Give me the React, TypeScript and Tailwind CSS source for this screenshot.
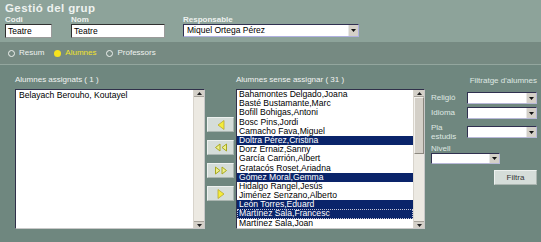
import React from "react";

const pending = [
  { name: "Bahamontes Delgado,Joana" },
  { name: "Basté Bustamante,Marc" },
  { name: "Bofill Bohigas,Antoni" },
  { name: "Bosc Pins,Jordi" },
  { name: "Camacho Fava,Miguel" },
  { name: "Doltra Pérez,Cristina", sel: true },
  { name: "Dorz Ernaiz,Sanny" },
  { name: "García Carrión,Albert" },
  { name: "Gratacós Roset,Ariadna" },
  { name: "Gómez Moral,Gemma", sel: true },
  { name: "Hidalgo Rangel,Jesús" },
  { name: "Jiménez Senzano,Alberto" },
  { name: "León Torres,Eduard", sel: true },
  { name: "Martínez Sala,Francesc", sel: true, focus: true },
  { name: "Martínez Sala,Joan" },
];

function DropBtn() {
  return (
    <div className="w-[10px] h-full bg-[#d4d0c8] border-l border-[#e8e8e8] flex items-center justify-center shrink-0">
      <svg width="5" height="3" viewBox="0 0 5 3">
        <path d="M0 0h5L2.5 3z" fill="#111" />
      </svg>
    </div>
  );
}

function Select({ w, h = "h-[12px]" }: { w: string; h?: string }) {
  return (
    <div className={`${w} ${h} bg-white flex border-t border-l border-[#303050] border-b border-r border-b-[#b8b8d8] border-r-[#b8b8d8]`}>
      <div className="flex-1" />
      <DropBtn />
    </div>
  );
}

function Scrollbar({ thumb }: { thumb?: boolean }) {
  return (
    <div className="w-[11px] h-full flex flex-col bg-[#ece9e2] border-l border-[#d8d4cc]">
      <div className="h-[7px] bg-[#d4d0c8] flex items-center justify-center border-b border-[#a8a49c]">
        <svg width="5" height="3" viewBox="0 0 5 3">
          <path d="M2.5 0L5 3H0z" fill="#222" />
        </svg>
      </div>
      {thumb ? (
        <div className="h-[57px] bg-[#d4d0c8] border border-[#f4f2ee] border-b-[#8c887f] border-r-[#8c887f]" />
      ) : null}
      <div className="flex-1" />
      <div className="h-[7px] bg-[#d4d0c8] flex items-center justify-center border-t border-[#a8a49c]">
        <svg width="5" height="3" viewBox="0 0 5 3">
          <path d="M0 0h5L2.5 3z" fill="#222" />
        </svg>
      </div>
    </div>
  );
}

function MoveBtn({ kind }: { kind: "l" | "ll" | "rr" | "r" }) {
  let icon: React.ReactNode = null;
  if (kind === "l")
    icon = (
      <svg width="8" height="10" viewBox="0 0 8 10">
        <path d="M7 0.5V9.5L1 5z" fill="#f4ec3a" stroke="#b8a830" strokeWidth="0.8" />
      </svg>
    );
  if (kind === "r")
    icon = (
      <svg width="8" height="10" viewBox="0 0 8 10">
        <path d="M1 0.5V9.5L7 5z" fill="#f4ec3a" stroke="#b8a830" strokeWidth="0.8" />
      </svg>
    );
  if (kind === "ll")
    icon = (
      <svg width="14" height="9" viewBox="0 0 14 9">
        <path d="M6 1V8L1.5 4.5z M12.5 1V8L8 4.5z" fill="#eef08a" stroke="#a8a820" strokeWidth="1" />
      </svg>
    );
  if (kind === "rr")
    icon = (
      <svg width="14" height="9" viewBox="0 0 14 9">
        <path d="M1.5 1V8L6 4.5z M8 1V8L12.5 4.5z" fill="#eef08a" stroke="#a8a820" strokeWidth="1" />
      </svg>
    );
  return (
    <div className="w-[27px] h-[15px] bg-[#d5ddd9] border border-[#edf1ef] border-b-[#aab5b0] border-r-[#aab5b0] flex items-center justify-center">
      {icon}
    </div>
  );
}

function Radio({ label, on }: { label: string; on?: boolean }) {
  return (
    <div className="flex items-center gap-[4px] mr-[10px]">
      {on ? (
        <div className="w-[7px] h-[7px] rounded-full bg-[#f7e21c]" />
      ) : (
        <div className="w-[7px] h-[7px] rounded-full border border-[#eef2ef]" />
      )}
      <span className={on ? "text-[#f2e42a]" : "text-[#eef2ef]"}>{label}</span>
    </div>
  );
}

export default function App() {
  return (
    <div
      className="w-[541px] h-[242px] bg-[#6f877f] overflow-hidden flex flex-col"
      style={{ fontFamily: '"Liberation Sans", Arial, sans-serif' }}
    >
      {/* header */}
      <div className="h-[42px] bg-[#8da39a] px-[5px] pt-[2px] shrink-0">
        <div className="text-[11.5px] font-bold leading-[13px] text-[#eef2ef] tracking-[0.4px]">Gestió del grup</div>
        <div className="flex">
          <div className="w-[66px]">
            <div className="text-[8px] font-bold leading-[9px] text-[#eef2ef]">Codi</div>
            <div className="w-[47px] h-[14px] bg-white border border-[#303030] border-b-[#9a9a9a] border-r-[#9a9a9a] text-[8.5px] leading-[12px] pl-[2px] text-black">
              Teatre
            </div>
          </div>
          <div className="w-[112px]">
            <div className="text-[8px] font-bold leading-[9px] text-[#eef2ef]">Nom</div>
            <div className="w-[94px] h-[14px] bg-white border border-[#303030] border-b-[#9a9a9a] border-r-[#9a9a9a] text-[8.5px] leading-[12px] pl-[2px] text-black">
              Teatre
            </div>
          </div>
          <div>
            <div className="text-[8px] font-bold leading-[9px] text-[#eef2ef]">Responsable</div>
            <div className="w-[176px] h-[13px] bg-white flex border-t border-l border-[#303050] border-b border-r border-b-[#b0b0e0] border-r-[#b0b0e0]">
              <div className="flex-1 text-[8.5px] leading-[11px] pl-[3px] text-black">Miquel Ortega Pérez</div>
              <DropBtn />
            </div>
          </div>
        </div>
      </div>

      {/* tabs */}
      <div className="h-[23px] bg-[#768a82] border-b border-[#93a69e] flex items-center pl-[8px] text-[8px] shrink-0">
        <Radio label="Resum" />
        <Radio label="Alumnes" on />
        <Radio label="Professors" />
      </div>

      {/* main */}
      <div className="flex pl-[15px] pt-[9px] text-[8px] text-[#f2f4f2]">
        <div className="w-[190px]">
          <div className="h-[15px] leading-[10px] pt-[1px]">Alumnes assignats ( 1 )</div>
          <div className="h-[140px] bg-white flex border border-[#30304a] border-b-[#c8c8c8] border-r-[#c8c8c8]">
            <div className="flex-1 text-[8.6px] leading-[9.2px] text-black pl-[3px] pt-[1px]">Belayach Berouho, Koutayel</div>
            <Scrollbar />
          </div>
        </div>

        <div className="ml-[2px] pt-[43px] flex flex-col gap-[8px]">
          <MoveBtn kind="l" />
          <MoveBtn kind="ll" />
          <MoveBtn kind="rr" />
          <MoveBtn kind="r" />
        </div>

        <div className="ml-[2px] w-[189px]">
          <div className="h-[15px] leading-[10px] pt-[1px]">Alumnes sense assignar ( 31 )</div>
          <div className="h-[140px] bg-white flex border border-[#30304a] border-b-[#c8c8c8] border-r-[#c8c8c8]">
            <div className="flex-1 flex flex-col">
              {pending.map((p) => (
                <div
                  key={p.name}
                  className={`h-[9.2px] text-[8.6px] leading-[9.2px] pl-[2px] whitespace-nowrap ${
                    p.sel ? "bg-[#0a246a] text-white" : "text-black"
                  } ${p.focus ? "outline outline-1 outline-dotted outline-[#c8c8d8] -outline-offset-1" : ""}`}
                >
                  {p.name}
                </div>
              ))}
            </div>
            <Scrollbar thumb />
          </div>
        </div>

        <div className="ml-[6px] w-[106px] text-[#dfe7e3]">
          <div className="text-right leading-[10px] pt-[2px] h-[18px]">Filtratge d'alumnes</div>
          <div className="flex items-center justify-between h-[12px]">
            <span>Religió</span>
            <Select w="w-[70px]" />
          </div>
          <div className="flex items-center justify-between h-[12px] mt-[3px]">
            <span>Idioma</span>
            <Select w="w-[70px]" />
          </div>
          <div className="flex items-center justify-between mt-[4px]">
            <span className="leading-[9px]">
              Pla
              <br />
              estudis
            </span>
            <Select w="w-[70px]" />
          </div>
          <div className="leading-[9px] mt-[3px]">Nivell</div>
          <Select w="w-[69px]" h="h-[11px]" />
          <div className="flex justify-end mt-[6px]">
            <div className="w-[43px] h-[15px] bg-[#d5ddd9] border border-[#edf1ef] border-b-[#aab5b0] border-r-[#aab5b0] text-[8px] leading-[13px] text-center text-[#333]">
              Filtra
            </div>
          </div>
        </div>
      </div>
    </div>
  );
}
